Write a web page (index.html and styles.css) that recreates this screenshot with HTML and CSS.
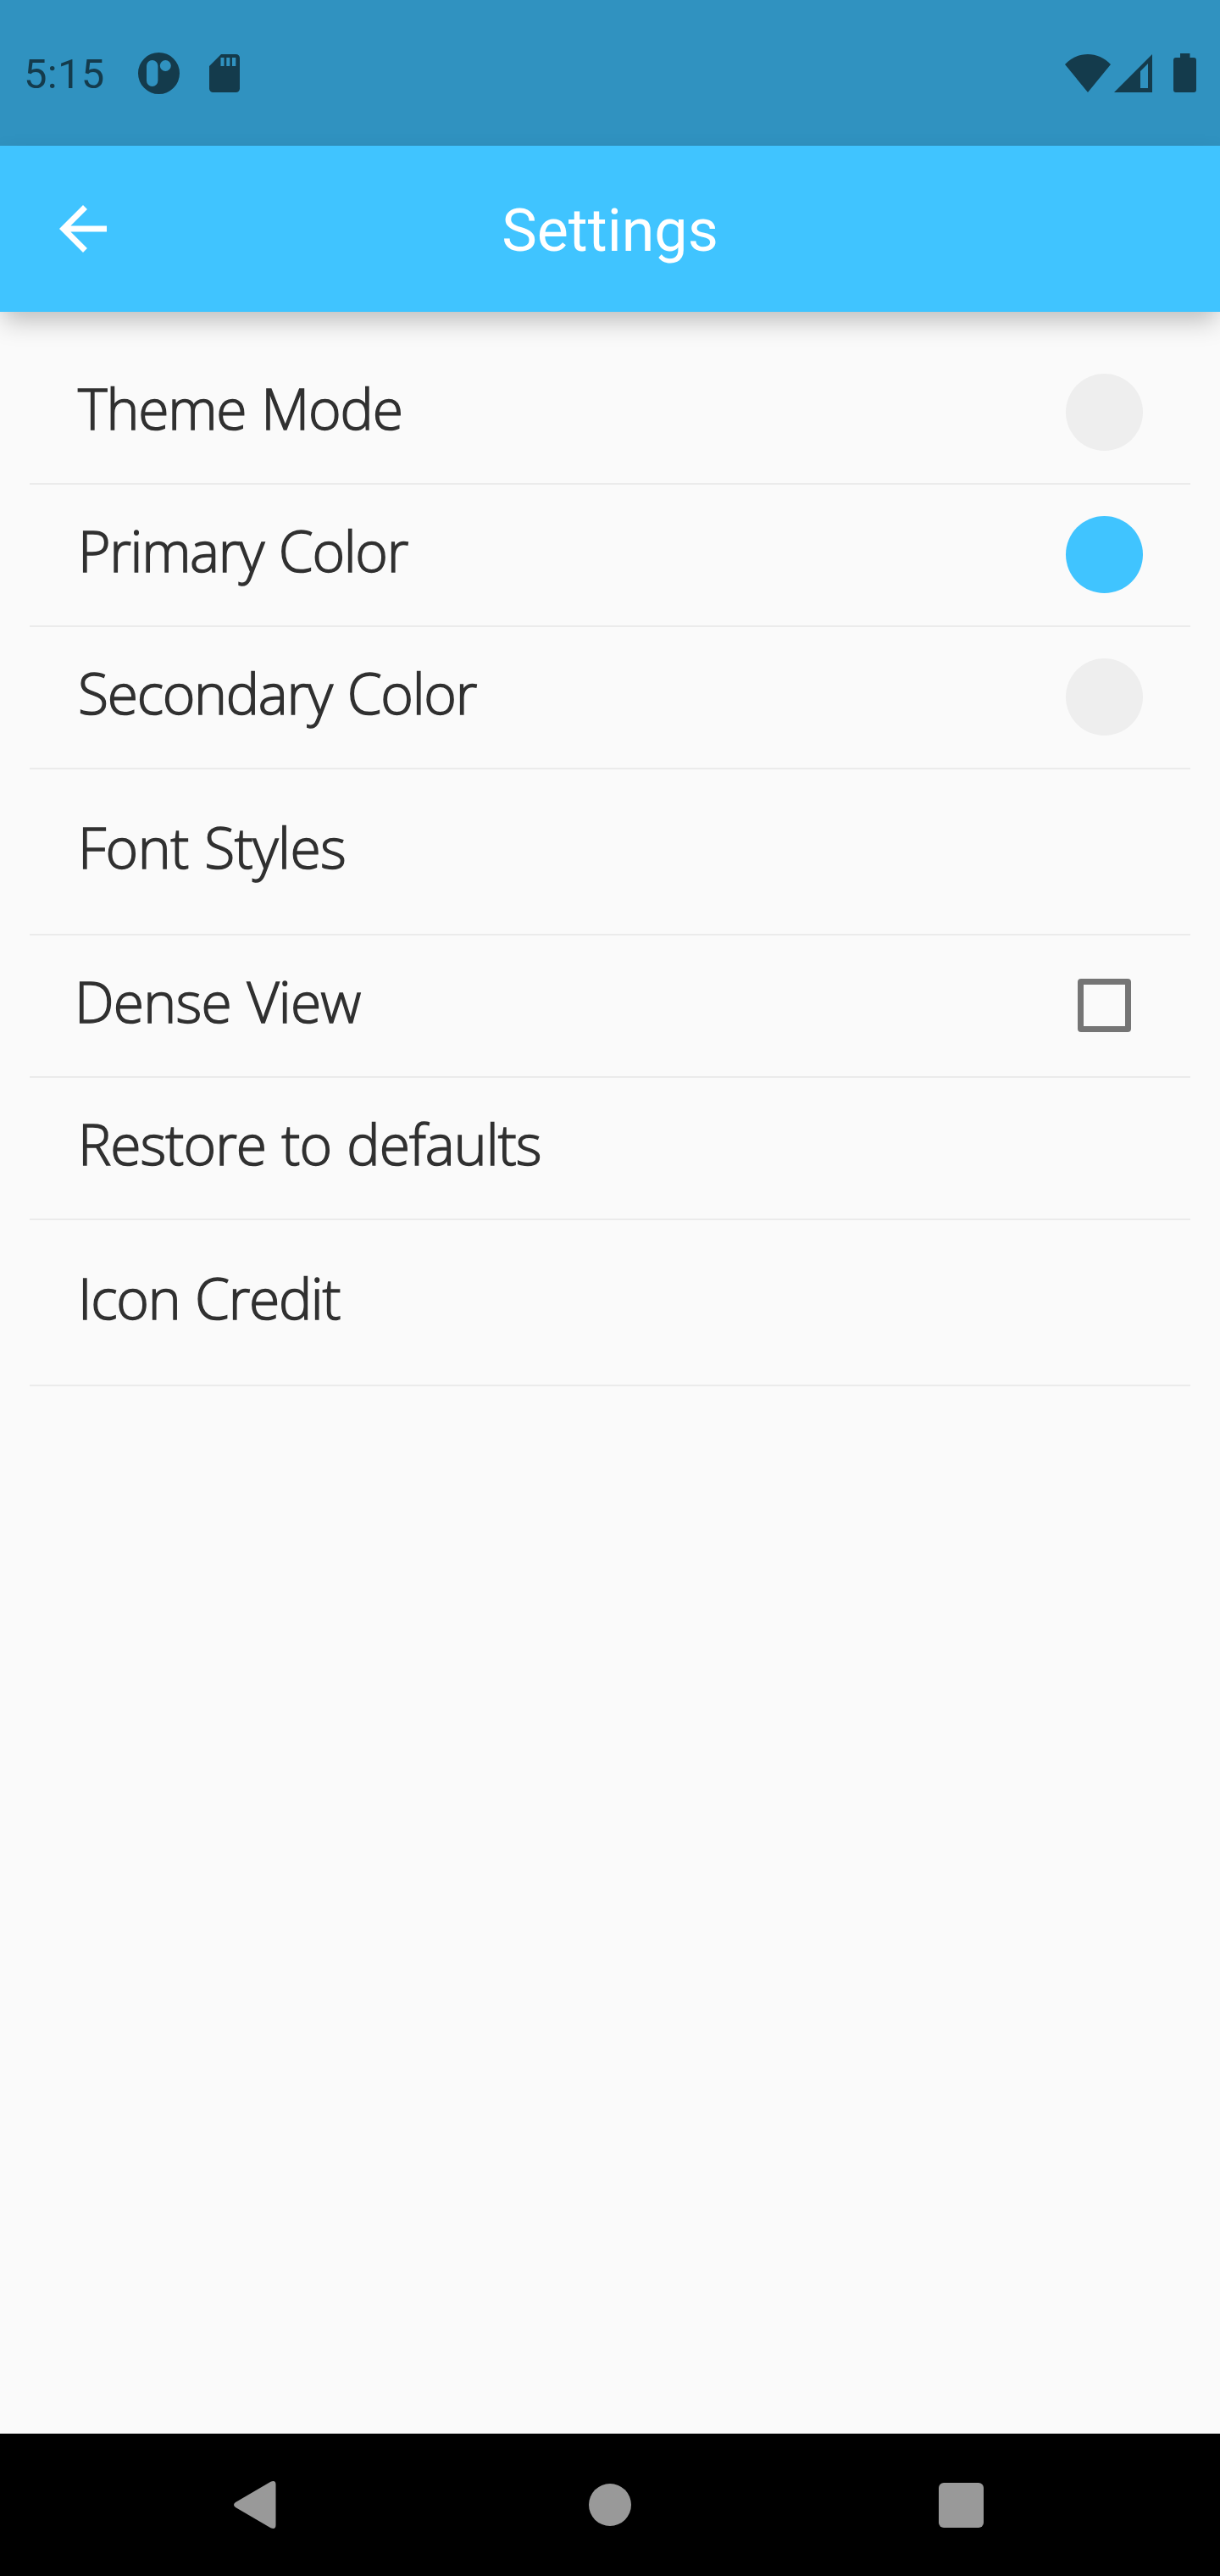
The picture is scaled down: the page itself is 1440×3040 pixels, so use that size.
FILE: index.html
```html
<!DOCTYPE html>
<html lang="en">
<head>
<meta charset="utf-8">
<title>Settings</title>
<link rel="stylesheet" href="styles.css">
</head>
<body>
<div class="screen">
  <div class="status-bar">
    <div class="status-left">
      <span class="clock">5:15</span>
      <svg class="icon-app" viewBox="0 0 49 49"><path fill-rule="evenodd" d="M24.5 0a24.5 24.5 0 1 1 0 49a24.5 24.5 0 0 1 0-49zM16.7 9a6.7 6.7 0 0 0-6.7 6.7V33.300a6.700 6.700 0 0 0 13.400 0V15.700A6.700 6.700 0 0 0 16.700 9zM32.300 9a6.500 6.500 0 1 0 0 13a6.500 6.500 0 0 0 0-13z"/></svg>
      <svg class="icon-sd" viewBox="0 0 36 45"><path fill-rule="evenodd" d="M14 0H31.500A4.500 4.500 0 0 1 36 4.500V40.500A4.500 4.500 0 0 1 31.500 45H4.500A4.500 4.500 0 0 1 0 40.500V14zM13.500 4V14H17.500V4zM20.300 4V14H24.300V4zM27 4V14H31.300V4z"/></svg>
    </div>
    <div class="status-right">
      <svg class="icon-wifi" viewBox="0 0 54 45"><path d="M0 12C15-4 39-4 54 12L27 45z"/></svg>
      <svg class="icon-signal" viewBox="0 0 45 45"><path fill-rule="evenodd" d="M45 0V45H0zM40 11L31 20V40H40z"/></svg>
      <svg class="icon-battery" viewBox="0 0 27 46"><path d="M8 0H19.500V5H24A3 3 0 0 1 27 8V43A3 3 0 0 1 24 46H3A3 3 0 0 1 0 43V8A3 3 0 0 1 3 5H8z"/></svg>
    </div>
  </div>

  <header class="app-bar">
    <svg class="icon-back" viewBox="0 0 24 24"><path d="M20 11H7.830l5.590-5.590L12 4l-8 8 8 8 1.410-1.410L7.830 13H20v-2z"/></svg>
    <h1 class="title">Settings</h1>
  </header>

  <main class="settings">
    <div class="row"><span class="label theme-mode">Theme Mode</span><span class="swatch"></span></div>
    <div class="row"><span class="label primary-color">Primary Color</span><span class="swatch swatch-primary"></span></div>
    <div class="row"><span class="label secondary-color">Secondary Color</span><span class="swatch"></span></div>
    <div class="row row-tall"><span class="label font-styles">Font Styles</span></div>
    <div class="row row-check"><span class="label dense-view">Dense View</span><span class="checkbox"></span></div>
    <div class="row"><span class="label restore">Restore to defaults</span></div>
    <div class="row row-tall"><span class="label icon-credit">Icon Credit</span></div>
  </main>

  <nav class="nav-bar">
    <svg class="nav-back" viewBox="0 0 50 56"><path d="M43.500 .8Q49.500-1.500 49.500 4V52Q49.500 57.500 43.500 55.200L2 31Q-2 28 2 25z"/></svg>
    <span class="nav-home"></span>
    <span class="nav-recent"></span>
  </nav>
</div>
</body>
</html>
```
FILE: styles.css
```css
* { box-sizing: border-box; }

body { margin: 0; }

svg { display: block; flex: none; }

.screen {
  display: flex;
  flex-direction: column;
  width: 1440px;
  height: 3040px;
  background: #fafafa;
  font-family: Roboto, sans-serif;
}

/* Status bar */
.status-bar {
  display: flex;
  justify-content: space-between;
  flex: none;
  height: 172px;
  padding: 0 28px;
  background: #3092c0;
  color: #143b4c;
  fill: #143b4c;
}
.status-left,
.status-right { display: flex; align-items: center; }
.clock { width: 135px; padding-top: 3px; font-size: 49px; line-height: 1; letter-spacing: .3px; }
.icon-app { width: 49px; height: 49px; }
.icon-sd { width: 36px; height: 45px; margin-left: 34.500px; }
.icon-wifi { width: 54px; height: 45px; }
.icon-signal { width: 45px; height: 45px; margin-left: 4px; }
.icon-battery { width: 27px; height: 46px; margin-left: 25px; }

/* App bar */
.app-bar {
  display: grid;
  grid-template-columns: 84px 1fr 84px;
  align-items: center;
  flex: none;
  height: 196px;
  padding: 0 56px;
  background: #40c4ff;
  box-shadow: 0 14px 28px -4px rgba(0, 0, 0, .25);
}
.icon-back { width: 84px; height: 84px; fill: #fff; }
.title {
  margin: 0;
  padding-top: 4px;
  color: #fff;
  font-size: 70px;
  font-weight: 400;
  line-height: 1.2;
  text-align: center;
}

/* Settings list */
.settings { flex: 1; padding: 36px 35px 0; }
.row {
  display: flex;
  align-items: center;
  justify-content: space-between;
  height: 168px;
  padding: 0 56px 0 57px;
  border-bottom: 2px solid #ebebeb;
}
.row-tall { height: 196px; }
.row-check { padding: 0 70px 0 53px; }
.label {
  padding-bottom: 13px;
  color: #303030;
  font: 300 66px/90px "Open Sans", sans-serif;
  white-space: nowrap;
  word-spacing: 2px;
  -webkit-text-stroke: 1.400px #303030;
}
.theme-mode { letter-spacing: -1.200px; }
.primary-color { letter-spacing: -1.350px; }
.secondary-color { letter-spacing: -1.300px; }
.font-styles { letter-spacing: -.55px; }
.dense-view { letter-spacing: -.75px; }
.restore { letter-spacing: -.97px; }
.icon-credit { letter-spacing: -1.350px; }

.swatch { width: 91px; height: 91px; margin-bottom: 1px; border-radius: 50%; background: #eee; }
.swatch-primary { background: #40c4ff; }
.checkbox { width: 63px; height: 63px; margin-bottom: 1px; border: 7px solid #757575; border-radius: 4px; }

/* System navigation */
.nav-bar {
  display: flex;
  align-items: center;
  justify-content: space-between;
  flex: none;
  height: 168px;
  padding: 0 279px 0 276px;
  background: #000;
}
.nav-back { width: 50px; height: 56px; fill: #999; }
.nav-home { width: 50px; height: 50px; margin-left: 5px; border-radius: 50%; background: #999; }
.nav-recent { width: 53px; height: 53px; border-radius: 6px; background: #999; }
```
